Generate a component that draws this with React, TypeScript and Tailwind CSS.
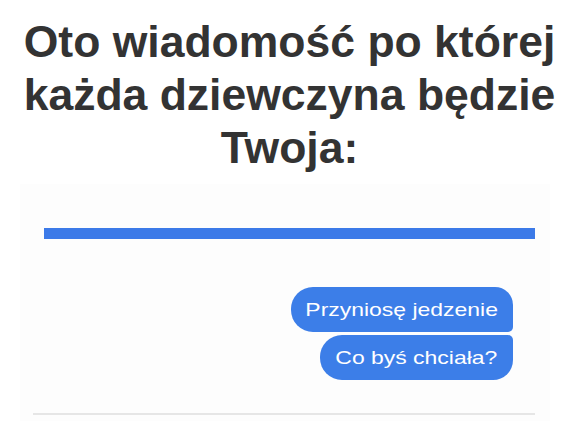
const App = () => {
  return (
    <div className="w-[579px] h-[421px] overflow-hidden bg-white font-['Liberation_Sans',Arial,sans-serif]">
      {/* Nagłówek */}
      <h1 className="pt-[15px] text-center text-[44.5px] leading-[53px] font-bold text-[#333333]">
        <span className="block whitespace-nowrap">Oto wiadomość po której</span>
        <span className="block whitespace-nowrap">każda dziewczyna będzie</span>
        <span className="block whitespace-nowrap">Twoja:</span>
      </h1>

      {/* Zrzut czatu */}
      <div className="mt-[10px] ml-[20px] mr-[29px] h-[240px] bg-[#fdfdfd] pt-[44px]">
        <div className="ml-[24px] mr-[15px] h-[11px] bg-[#3c7ae8]" />

        <div className="mt-[48px] pr-[37px] flex flex-col items-end gap-[3px]">
          <div className="w-[222px] h-[45px] flex items-center justify-center bg-[#3c7ee8] text-white text-[18.5px] rounded-l-[22px] rounded-tr-[18px] rounded-br-[5px]">
            <span className="inline-block scale-x-124 whitespace-nowrap">Przyniosę jedzenie</span>
          </div>
          <div className="w-[193px] h-[45px] flex items-center justify-center bg-[#3c7ee8] text-white text-[18.5px] rounded-l-[22px] rounded-tr-[5px] rounded-br-[20px]">
            <span className="inline-block scale-x-124 whitespace-nowrap">Co byś chciała?</span>
          </div>
        </div>

        <div className="mt-[33px] ml-[13px] mr-[15px] h-[2px] bg-[#e6e6e6]" />
      </div>
    </div>
  );
};

export default App;
